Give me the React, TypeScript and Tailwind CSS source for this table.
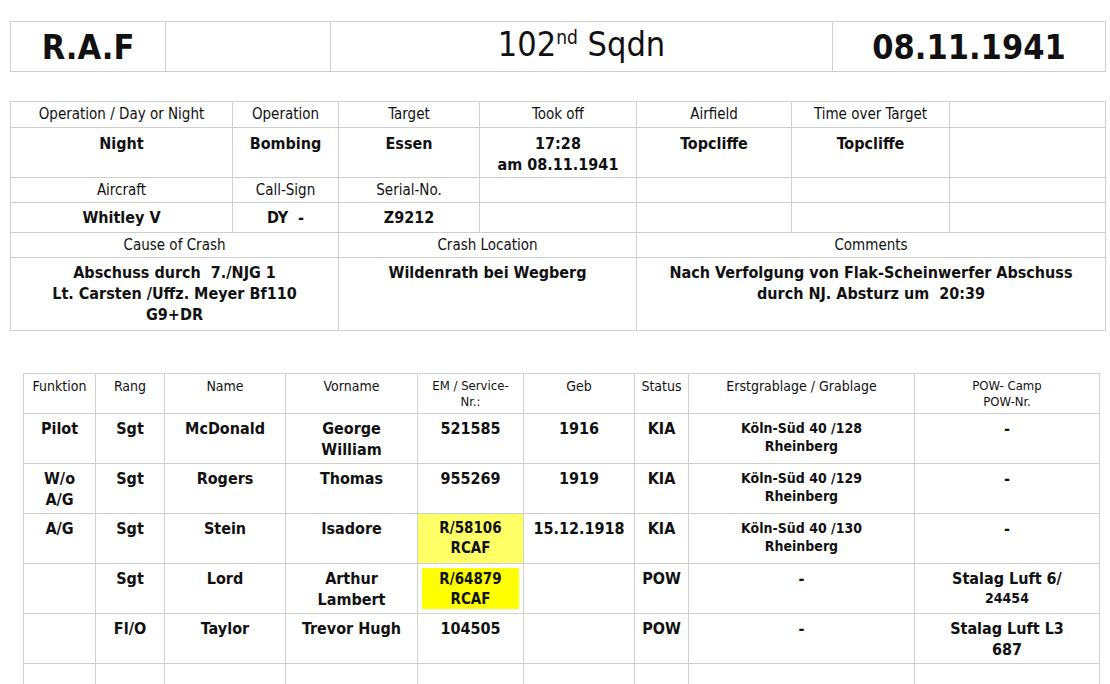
const grid = "border border-[#d0d0d0]"

type Crew = {
  funktion: string[]
  rang: string
  name: string
  vorname: string[]
  service: string[]
  mark?: "full" | "inset"
  geb: string
  status: string
  grab: string[]
  camp: string[]
}

const crew: Crew[] = [
  {
    funktion: ["Pilot"],
    rang: "Sgt",
    name: "McDonald",
    vorname: ["George", "William"],
    service: ["521585"],
    geb: "1916",
    status: "KIA",
    grab: ["Köln-Süd 40 /128", "Rheinberg"],
    camp: ["-"],
  },
  {
    funktion: ["W/o", "A/G"],
    rang: "Sgt",
    name: "Rogers",
    vorname: ["Thomas"],
    service: ["955269"],
    geb: "1919",
    status: "KIA",
    grab: ["Köln-Süd 40 /129", "Rheinberg"],
    camp: ["-"],
  },
  {
    funktion: ["A/G"],
    rang: "Sgt",
    name: "Stein",
    vorname: ["Isadore"],
    service: ["R/58106", "RCAF"],
    mark: "full",
    geb: "15.12.1918",
    status: "KIA",
    grab: ["Köln-Süd 40 /130", "Rheinberg"],
    camp: ["-"],
  },
  {
    funktion: [],
    rang: "Sgt",
    name: "Lord",
    vorname: ["Arthur", "Lambert"],
    service: ["R/64879", "RCAF"],
    mark: "inset",
    geb: "",
    status: "POW",
    grab: ["-"],
    camp: ["Stalag Luft 6/", "24454"],
  },
  {
    funktion: [],
    rang: "Fl/O",
    name: "Taylor",
    vorname: ["Trevor Hugh"],
    service: ["104505"],
    geb: "",
    status: "POW",
    grab: ["-"],
    camp: ["Stalag Luft L3", "687"],
  },
]

function Lines({ lines }: { lines: string[] }) {
  return (
    <>
      {lines.map((l, i) => (
        <div key={i}>{l}</div>
      ))}
    </>
  )
}

export default function App() {
  return (
    <div className="h-[684px] overflow-hidden bg-white text-[#111] font-['DejaVu_Sans_Condensed','DejaVu_Sans',sans-serif]">
      <div className="pt-[21px] pl-[10px]">
        {/* Header strip */}
        <table className="table-fixed border-collapse w-[1095px]">
          <colgroup>
            <col className="w-[155px]" />
            <col className="w-[165px]" />
            <col className="w-[502px]" />
            <col className="w-[273px]" />
          </colgroup>
          <tbody className="leading-[40px]">
            <tr className="h-[50px]">
              <td className={`${grid} text-center text-[34px] font-bold`}>R.A.F</td>
              <td className={grid}></td>
              <td className={`${grid} text-center text-[34px]`}>
                102<span className="text-[19px] relative top-[-12px]">nd</span> Sqdn
              </td>
              <td className={`${grid} text-center text-[34px] font-bold`}>08.11.1941</td>
            </tr>
          </tbody>
        </table>

        {/* Operation details */}
        <table className="table-fixed border-collapse w-[1095px] mt-[29px]">
          <colgroup>
            <col className="w-[222px]" />
            <col className="w-[106px]" />
            <col className="w-[141px]" />
            <col className="w-[157px]" />
            <col className="w-[155px]" />
            <col className="w-[158px]" />
            <col className="w-[156px]" />
          </colgroup>
          <tbody className="text-center">
            <tr className="h-[26px] text-[15px]">
              <td className={grid}>Operation / Day or Night</td>
              <td className={grid}>Operation</td>
              <td className={grid}>Target</td>
              <td className={grid}>Took off</td>
              <td className={grid}>Airfield</td>
              <td className={grid}>Time over Target</td>
              <td className={grid}></td>
            </tr>
            <tr className="h-[50px] text-[16px] font-bold leading-[21px] align-top">
              <td className={`${grid} pt-[5px]`}>Night</td>
              <td className={`${grid} pt-[5px]`}>Bombing</td>
              <td className={`${grid} pt-[5px]`}>Essen</td>
              <td className={`${grid} pt-[5px]`}>
                17:28
                <br />
                am 08.11.1941
              </td>
              <td className={`${grid} pt-[5px]`}>Topcliffe</td>
              <td className={`${grid} pt-[5px]`}>Topcliffe</td>
              <td className={grid}></td>
            </tr>
            <tr className="h-[25px] text-[15px]">
              <td className={grid}>Aircraft</td>
              <td className={grid}>Call-Sign</td>
              <td className={grid}>Serial-No.</td>
              <td className={grid}></td>
              <td className={grid}></td>
              <td className={grid}></td>
              <td className={grid}></td>
            </tr>
            <tr className="h-[30px] text-[16px] font-bold">
              <td className={grid}>Whitley V</td>
              <td className={`${grid} whitespace-pre`}>DY  -</td>
              <td className={grid}>Z9212</td>
              <td className={grid}></td>
              <td className={grid}></td>
              <td className={grid}></td>
              <td className={grid}></td>
            </tr>
            <tr className="h-[25px] text-[15px]">
              <td colSpan={2} className={grid}>Cause of Crash</td>
              <td colSpan={2} className={grid}>Crash Location</td>
              <td colSpan={3} className={grid}>Comments</td>
            </tr>
            <tr className="h-[73px] text-[16px] font-bold leading-[21px] align-top">
              <td colSpan={2} className={`${grid} pt-[4px] whitespace-pre`}>
                {"Abschuss durch  7./NJG 1\nLt. Carsten /Uffz. Meyer Bf110\nG9+DR"}
              </td>
              <td colSpan={2} className={`${grid} pt-[4px]`}>Wildenrath bei Wegberg</td>
              <td colSpan={3} className={`${grid} pt-[4px] whitespace-pre`}>
                {"Nach Verfolgung von Flak-Scheinwerfer Abschuss\ndurch NJ. Absturz um  20:39"}
              </td>
            </tr>
          </tbody>
        </table>

        {/* Crew list */}
        <table className="table-fixed border-collapse w-[1076px] mt-[42px] ml-[13px]">
          <colgroup>
            <col className="w-[72px]" />
            <col className="w-[69px]" />
            <col className="w-[121px]" />
            <col className="w-[132px]" />
            <col className="w-[106px]" />
            <col className="w-[111px]" />
            <col className="w-[54px]" />
            <col className="w-[226px]" />
            <col className="w-[185px]" />
          </colgroup>
          <tbody className="text-center">
            <tr className="h-[40px] text-[14px] leading-[16px] align-top">
              <td className={`${grid} pt-[4px]`}>Funktion</td>
              <td className={`${grid} pt-[4px]`}>Rang</td>
              <td className={`${grid} pt-[4px]`}>Name</td>
              <td className={`${grid} pt-[4px]`}>Vorname</td>
              <td className={`${grid} pt-[4px] text-[13px]`}>
                EM / Service-
                <br />
                Nr.:
              </td>
              <td className={`${grid} pt-[4px]`}>Geb</td>
              <td className={`${grid} pt-[4px]`}>Status</td>
              <td className={`${grid} pt-[4px]`}>Erstgrablage / Grablage</td>
              <td className={`${grid} pt-[4px] text-[13px]`}>
                POW- Camp
                <br />
                POW-Nr.
              </td>
            </tr>
            {crew.map((c) => (
              <tr key={c.name} className="h-[50px] text-[16px] font-bold leading-[21px] align-top">
                <td className={`${grid} pt-[4px]`}>
                  <Lines lines={c.funktion} />
                </td>
                <td className={`${grid} pt-[4px]`}>{c.rang}</td>
                <td className={`${grid} pt-[4px]`}>{c.name}</td>
                <td className={`${grid} pt-[4px]`}>
                  <Lines lines={c.vorname} />
                </td>
                {c.mark === "inset" ? (
                  <td className={`${grid} p-[4px]`}>
                    <div className="bg-[#ffff00] h-[41px] text-[15px] leading-[20px] pt-[1px]">
                      <Lines lines={c.service} />
                    </div>
                  </td>
                ) : (
                  <td
                    className={`${grid} pt-[4px] ${
                      c.mark === "full" ? "bg-[#ffff66] text-[15px] leading-[20px]" : ""
                    }`}
                  >
                    <Lines lines={c.service} />
                  </td>
                )}
                <td className={`${grid} pt-[4px]`}>{c.geb}</td>
                <td className={`${grid} pt-[4px]`}>{c.status}</td>
                <td
                  className={`${grid} pt-[4px] ${
                    c.grab.length > 1 ? "text-[14px] leading-[18px] pt-[5px]" : ""
                  }`}
                >
                  <Lines lines={c.grab} />
                </td>
                <td className={`${grid} pt-[4px]`}>
                  <div>{c.camp[0]}</div>
                  {c.camp[1] && (
                    <div className={c.camp[1].length > 3 ? "text-[14px] leading-[18px]" : ""}>
                      {c.camp[1]}
                    </div>
                  )}
                </td>
              </tr>
            ))}
            <tr className="h-[50px]">
              {Array.from({ length: 9 }).map((_, i) => (
                <td key={i} className={grid}></td>
              ))}
            </tr>
          </tbody>
        </table>
      </div>
    </div>
  )
}
